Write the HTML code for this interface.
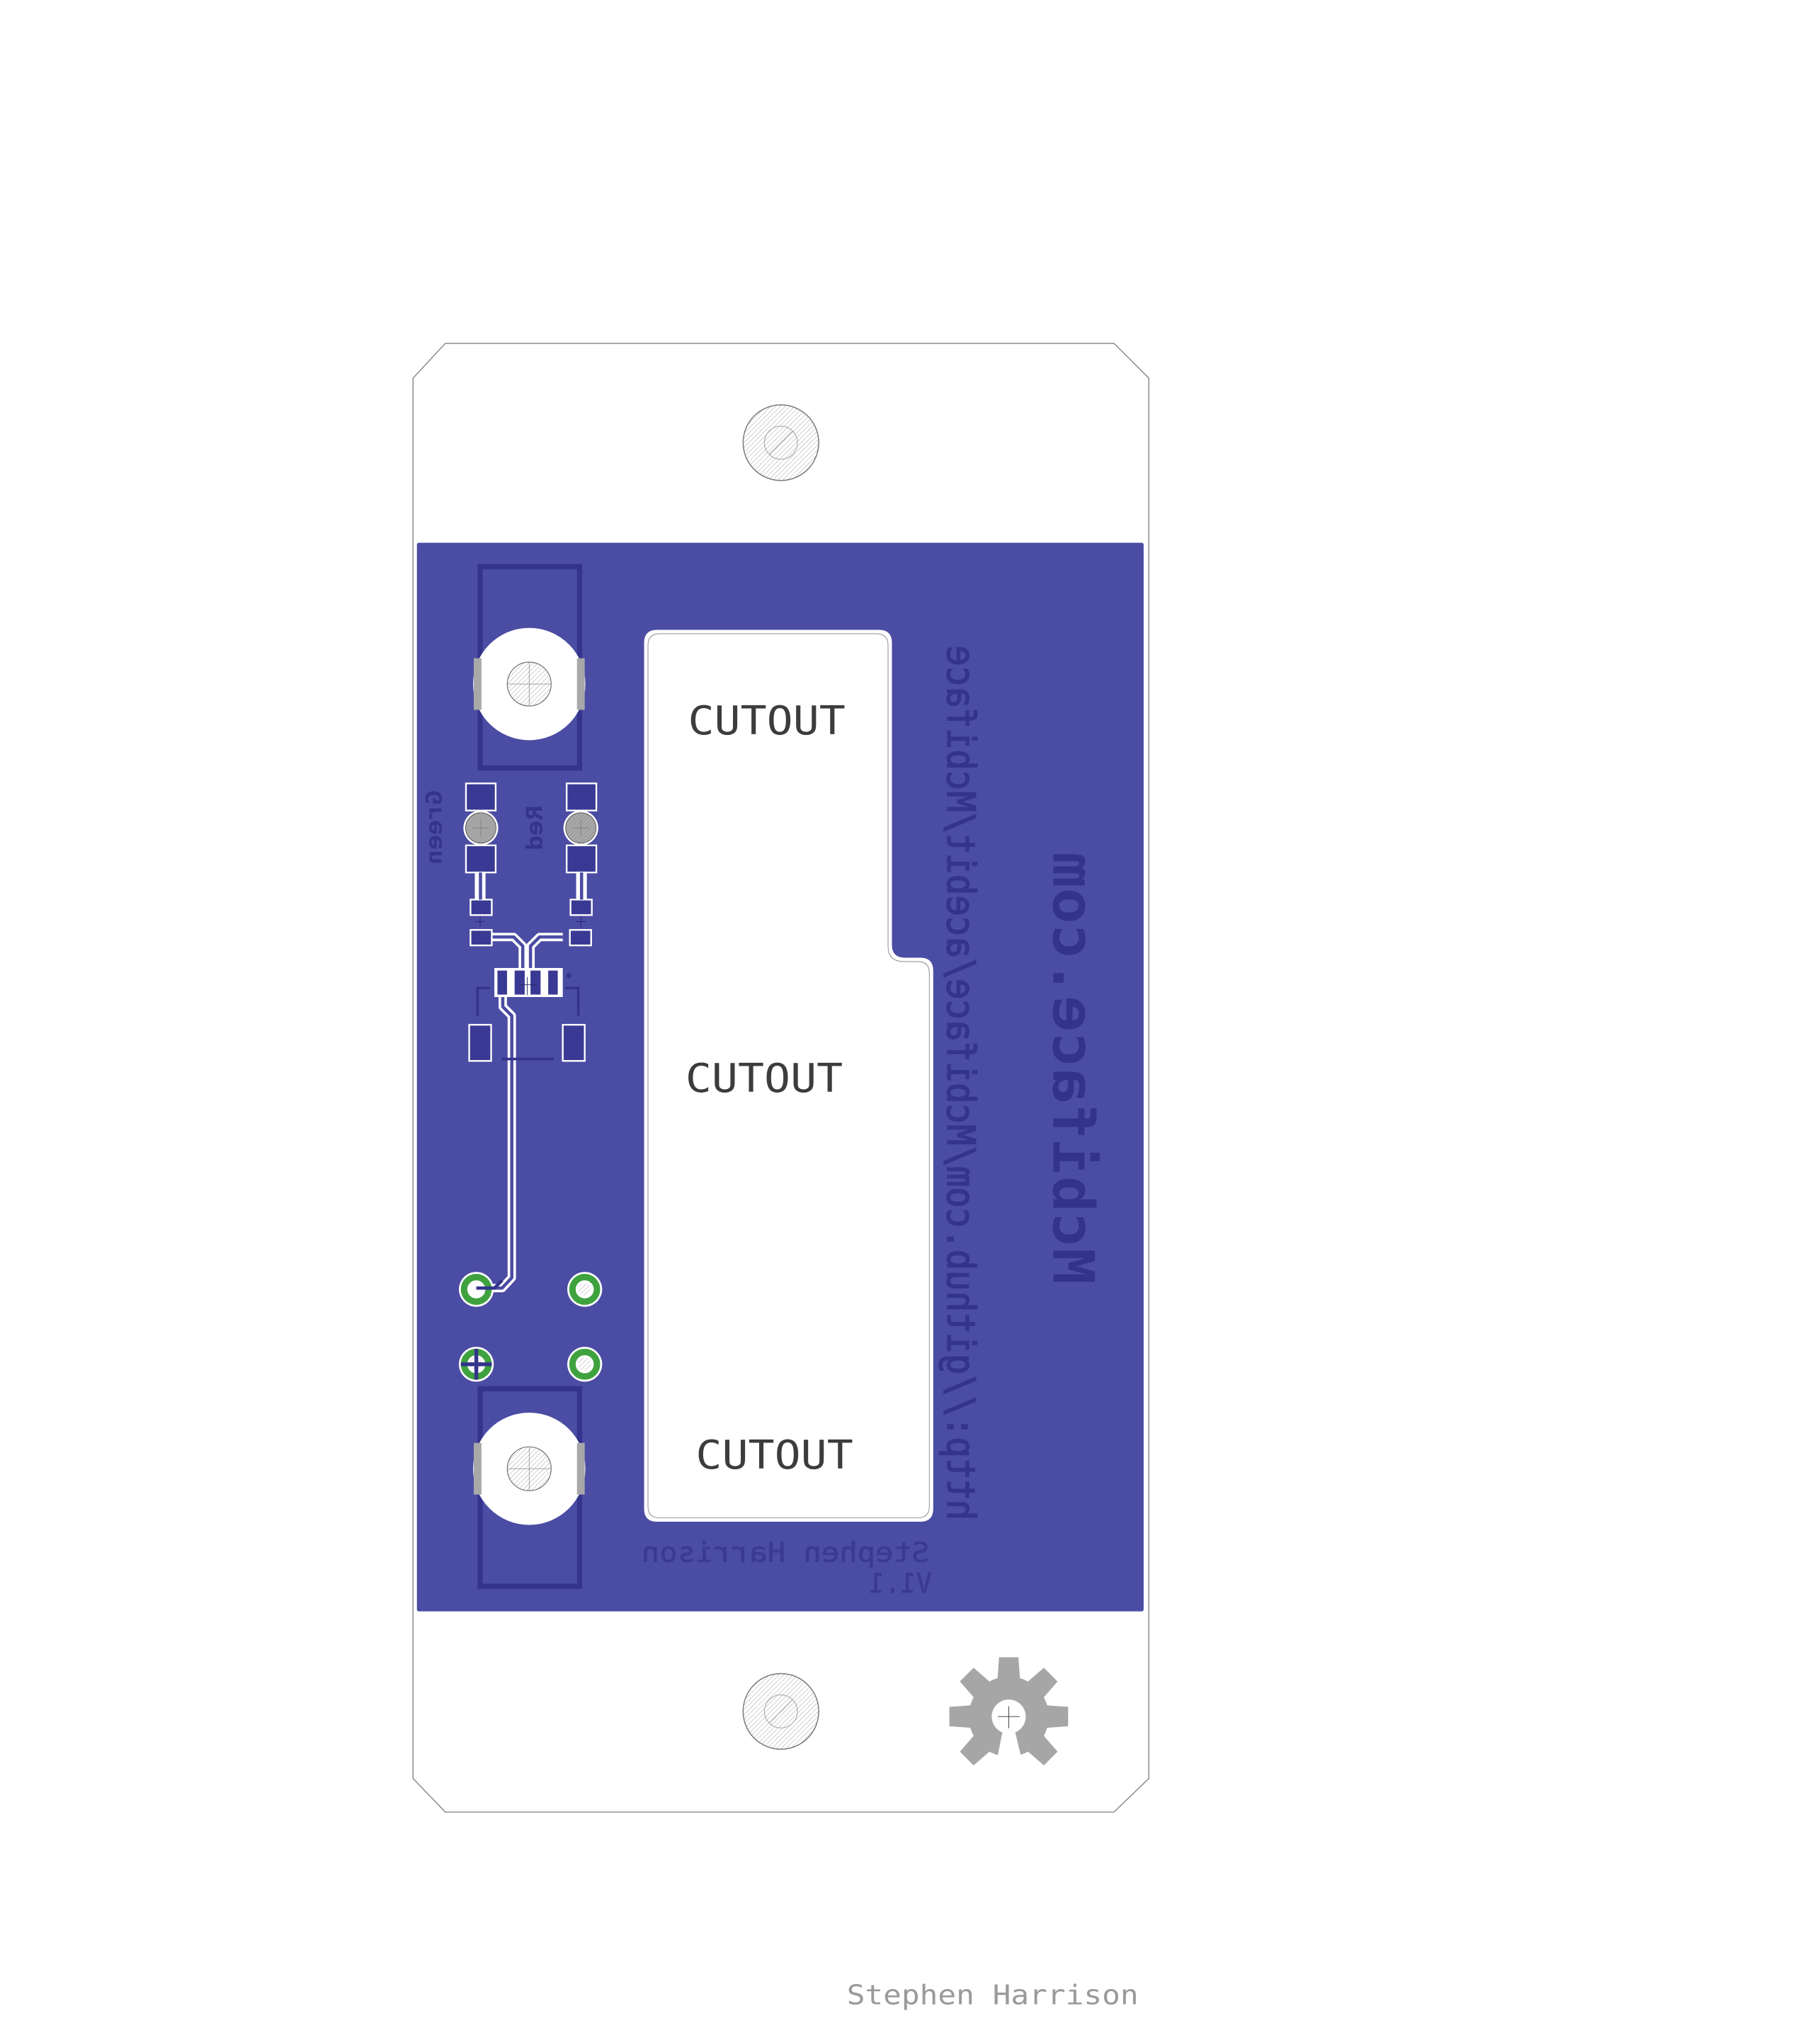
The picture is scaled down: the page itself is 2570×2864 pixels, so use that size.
<!DOCTYPE html>
<html><head><meta charset="utf-8"><style>
html,body{margin:0;padding:0;background:#fff;}
svg{display:block;}
</style></head><body>
<svg width="2570" height="2864" viewBox="0 0 1410 1571.3" preserveAspectRatio="none" xmlns="http://www.w3.org/2000/svg">
<defs>
<pattern id="hg" width="2.6" height="2.6" patternUnits="userSpaceOnUse" patternTransform="rotate(45)">
<rect width="2.6" height="2.6" fill="#fff"/><line x1="0" y1="0" x2="0" y2="2.6" stroke="#9a9a9a" stroke-width="0.5"/></pattern>
<pattern id="hb" width="2.2" height="2.2" patternUnits="userSpaceOnUse" patternTransform="rotate(45)">
<rect width="2.2" height="2.2" fill="#3c3c9a"/><line x1="0" y1="0" x2="0" y2="2.2" stroke="#2e2e80" stroke-width="0.9"/></pattern>
<pattern id="hgr" width="2.2" height="2.2" patternUnits="userSpaceOnUse" patternTransform="rotate(45)">
<rect width="2.2" height="2.2" fill="#a8a8a8"/><line x1="0" y1="0" x2="0" y2="2.2" stroke="#8a8a8a" stroke-width="0.5"/></pattern>
</defs>
<rect width="1410" height="1571.3" fill="#fff"/>
<polygon points="345,266 863,266 890,293 890,1378 863,1404 345,1404 320,1378 320,293" fill="#fff" stroke="#8a8a8a" stroke-width="0.8"/>
<circle cx="605" cy="343" r="29.3" fill="url(#hg)" stroke="#777" stroke-width="0.8"/>
<circle cx="605" cy="343" r="12.8" fill="none" stroke="#aaa" stroke-width="0.6"/>
<line x1="596" y1="352" x2="614" y2="334" stroke="#aaa" stroke-width="0.6"/>
<circle cx="605" cy="1326" r="29.3" fill="url(#hg)" stroke="#777" stroke-width="0.8"/>
<circle cx="605" cy="1326" r="12.8" fill="none" stroke="#aaa" stroke-width="0.6"/>
<line x1="596" y1="1335" x2="614" y2="1317" stroke="#aaa" stroke-width="0.6"/>
<rect x="323" y="420.5" width="563" height="828" rx="1.5" fill="#4b4ca3"/>
<rect x="372" y="439" width="77" height="156" fill="none" stroke="#34348c" stroke-width="4"/>
<rect x="372" y="1076" width="77" height="153" fill="none" stroke="#34348c" stroke-width="4"/>
<g>
<circle cx="410" cy="530" r="43.5" fill="#fff"/>
<rect x="367" y="510" width="6" height="40" fill="#a8a8a8"/><rect x="447" y="510" width="6" height="40" fill="#a8a8a8"/>
<circle cx="410" cy="530" r="17" fill="url(#hg)" stroke="#666" stroke-width="0.6"/>
<line x1="393" y1="530" x2="427" y2="530" stroke="#999" stroke-width="0.5"/><line x1="410" y1="513" x2="410" y2="547" stroke="#999" stroke-width="0.5"/>
<circle cx="410" cy="1138" r="43.5" fill="#fff"/>
<rect x="367" y="1118" width="6" height="40" fill="#a8a8a8"/><rect x="447" y="1118" width="6" height="40" fill="#a8a8a8"/>
<circle cx="410" cy="1138" r="17" fill="url(#hg)" stroke="#666" stroke-width="0.6"/>
<line x1="393" y1="1138" x2="427" y2="1138" stroke="#999" stroke-width="0.5"/><line x1="410" y1="1121" x2="410" y2="1155" stroke="#999" stroke-width="0.5"/>
</g>
<g stroke="#fff" stroke-width="1.3">
<rect x="361" y="607" width="23" height="21" fill="url(#hb)"/>
<rect x="361" y="655" width="23" height="21" fill="url(#hb)"/>
<rect x="368.5" y="676" width="7" height="22" fill="#fff"/>
<rect x="364.5" y="697" width="16.5" height="12" fill="url(#hb)"/>
<rect x="439" y="607" width="23" height="21" fill="url(#hb)"/>
<rect x="439" y="655" width="23" height="21" fill="url(#hb)"/>
<rect x="447" y="676" width="7" height="22" fill="#fff"/>
<rect x="442" y="697" width="16.5" height="12" fill="url(#hb)"/>
</g>
<rect x="371" y="676" width="2.5" height="21" fill="#4b4ca3"/>
<rect x="449.3" y="676" width="2.5" height="21" fill="#4b4ca3"/>
<circle cx="372.5" cy="641.5" r="13.5" fill="#fff"/><circle cx="372.5" cy="641.5" r="11.8" fill="url(#hgr)" stroke="#333" stroke-width="0.4"/>
<circle cx="450" cy="641.5" r="13.5" fill="#fff"/><circle cx="450" cy="641.5" r="11.8" fill="url(#hgr)" stroke="#333" stroke-width="0.4"/>
<path d="M366 641.5h13M372.5 635v13M443.5 641.5h13M450 635v13" stroke="#777" stroke-width="0.4"/>
<path d="M368 714h8M372 710v8M446 714h8M450 710v8" stroke="#22226a" stroke-width="0.5"/>
<text transform="translate(342,612) rotate(90) scale(1,-1)" font-family="DejaVu Sans Mono" font-weight="bold" font-size="17" fill="#34348c" textLength="58" lengthAdjust="spacingAndGlyphs">Green</text>
<text transform="translate(420,624) rotate(90) scale(1,-1)" font-family="DejaVu Sans Mono" font-weight="bold" font-size="17" fill="#34348c" textLength="35" lengthAdjust="spacingAndGlyphs">Red</text>
<g fill="none" stroke-linejoin="round">
<path d="M381 726H398L405 733V752M436 726H418L411 733V752" stroke="#fff" stroke-width="6.5"/>
<rect x="403" y="733" width="10" height="19" fill="#fff" stroke="none"/>
<path d="M381 726H398L405 733V752M436 726H418L411 733V752" stroke="#4b4ca3" stroke-width="2.5"/>
<path d="M389.5 771V780L396.5 787V990L389 998H368" stroke="#fff" stroke-width="6.5"/>
<path d="M389.5 771V780L396.5 787V990L389 998H368" stroke="#4b4ca3" stroke-width="2.5"/>
</g>
<rect x="364.5" y="720.5" width="16.5" height="12" fill="url(#hb)" stroke="#fff" stroke-width="1.3"/>
<rect x="441.5" y="720.5" width="16.5" height="12" fill="url(#hb)" stroke="#fff" stroke-width="1.3"/>
<rect x="383" y="750" width="53" height="22.5" fill="#fff"/>
<g fill="url(#hb)" stroke="#fff" stroke-width="0.8">
<rect x="385" y="751.6" width="8.2" height="19.4"/><rect x="398.3" y="751.6" width="8.6" height="19.4"/>
<rect x="410.6" y="751.6" width="8.6" height="19.4"/><rect x="424.3" y="751.6" width="8.2" height="19.4"/>
</g>
<path d="M402 763h14M408.5 757v14" stroke="#22226a" stroke-width="0.5"/>
<circle cx="440.8" cy="756" r="2" fill="#34348c"/>
<path d="M379.5 765.5H370V787M437.8 765.5H448V787" fill="none" stroke="#34348c" stroke-width="2"/>
<line x1="388.6" y1="820.5" x2="428.9" y2="820.5" stroke="#34348c" stroke-width="2"/>
<rect x="363.5" y="794" width="17" height="28" fill="url(#hb)" stroke="#fff" stroke-width="1.3"/>
<rect x="436" y="794" width="17" height="28" fill="url(#hb)" stroke="#fff" stroke-width="1.3"/>
<g>
<circle cx="369" cy="999" r="13.5" fill="#fff"/><circle cx="369" cy="999" r="9.5" fill="none" stroke="#3fa23f" stroke-width="5"/><circle cx="369" cy="999" r="4" fill="#fff"/>
<circle cx="453" cy="999" r="13.5" fill="#fff"/><circle cx="453" cy="999" r="9.5" fill="none" stroke="#3fa23f" stroke-width="5"/><circle cx="453" cy="999" r="5" fill="url(#hg)"/>
<circle cx="369" cy="1057" r="13.5" fill="#fff"/><circle cx="369" cy="1057" r="9.5" fill="none" stroke="#3fa23f" stroke-width="5"/><circle cx="369" cy="1057" r="5" fill="url(#hg)"/>
<path d="M357 1057h24M369 1045v24" stroke="#34348c" stroke-width="3"/>
<circle cx="453" cy="1057" r="13.5" fill="#fff"/><circle cx="453" cy="1057" r="9.5" fill="none" stroke="#3fa23f" stroke-width="5"/><circle cx="453" cy="1057" r="5" fill="url(#hg)"/>
</g>
<path d="M369 998h14l6-6" fill="none" stroke="#34348c" stroke-width="2.5"/>
<path d="M499 498Q499 488 509 488L681 488Q691 488 691 498L691 732Q691 742 701 742L713 742Q723 742 723 752L723 1169Q723 1179 713 1179L509 1179Q499 1179 499 1169Z" fill="#fff"/>
<path d="M502 500Q502 491 511 491L679 491Q688 491 688 500L688 733Q688 745 700 745L711 745Q720 745 720 754L720 1167Q720 1176 711 1176L511 1176Q502 1176 502 1167Z" fill="none" stroke="#999" stroke-width="0.6"/>
<g font-family="DejaVu Sans Mono, Liberation Mono, monospace" font-size="31" fill="#3c3c3c">
<text x="533" y="569" textLength="122" lengthAdjust="spacingAndGlyphs">CUTOUT</text>
<text x="531" y="846" textLength="122" lengthAdjust="spacingAndGlyphs">CUTOUT</text>
<text x="539" y="1138" textLength="122" lengthAdjust="spacingAndGlyphs">CUTOUT</text>
</g>
<text transform="translate(734,1178) rotate(-90) scale(1,-1)" font-family="DejaVu Sans Mono, monospace" font-size="30" fill="#34348c" stroke="#34348c" stroke-width="0.9" textLength="678" lengthAdjust="spacingAndGlyphs">http://github.com/Mcbiface/acebit/Mcbiface</text>
<text transform="translate(816,995) rotate(-90) scale(1,-1)" font-family="DejaVu Sans Mono, monospace" font-weight="bold" font-size="44" fill="#33338c" textLength="335" lengthAdjust="spacingAndGlyphs">Mcbiface.com</text>
<text transform="translate(720,1210) scale(-1,1)" font-family="DejaVu Sans Mono, monospace" font-size="21" fill="#3a3a92" stroke="#3a3a92" stroke-width="0.4" textLength="223" lengthAdjust="spacingAndGlyphs">Stephen Harrison</text>
<text transform="translate(722,1234) scale(-1,1)" font-family="DejaVu Sans Mono, monospace" font-size="21" fill="#3a3a92" stroke="#3a3a92" stroke-width="0.4" textLength="49" lengthAdjust="spacingAndGlyphs">V1.1</text>
<g fill="#a6a6a6" transform="translate(781.5,1330)">
<circle r="31"/>
<g id="t"><path d="M-7.5,-46 L7.5,-46 L9,-25 L-9,-25Z"/></g>
<use href="#t" transform="rotate(45)"/><use href="#t" transform="rotate(90)"/><use href="#t" transform="rotate(135)"/>
<use href="#t" transform="rotate(225)"/><use href="#t" transform="rotate(270)"/><use href="#t" transform="rotate(315)"/>
</g>
<circle cx="781.5" cy="1330" r="13.2" fill="#fff"/>
<path d="M777 1340L772 1365L792 1365L786 1340Z" fill="#fff"/>
<path d="M773 1330h17M781.5 1322v17" stroke="#333" stroke-width="0.5"/>
<text x="656" y="1553" font-family="DejaVu Sans Mono, monospace" font-size="21" fill="#9a9a9a" textLength="226" lengthAdjust="spacingAndGlyphs">Stephen Harrison</text>
</svg>
</body></html>
